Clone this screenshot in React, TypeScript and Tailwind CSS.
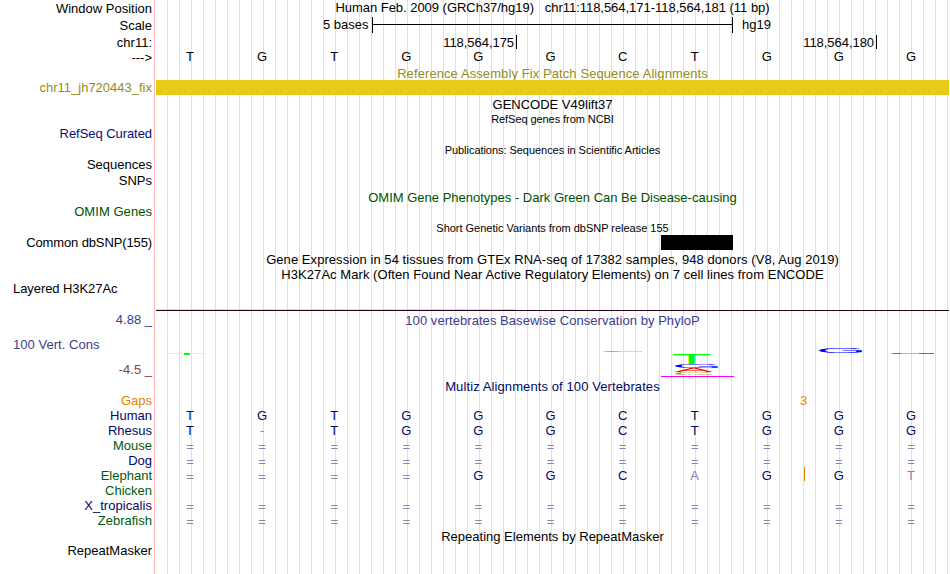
import React from "react";

interface Label {
  text: string;
  className: string;
}

interface Species {
  name: string;
  bases: string;
}

const labels: Label[] = [
  { text: "Window Position", className: "mt-px" },
  { text: "Scale", className: "mt-0.5" },
  { text: "chr11:", className: "mt-0.5" },
  { text: "--->", className: "" },
  { text: "chr11_jh720443_fix", className: "mt-[15px] text-[#968c19]" },
  { text: "RefSeq Curated", className: "mt-[31px] text-[#0c0c78] tracking-[-0.06px]" },
  { text: "Sequences", className: "mt-4" },
  { text: "SNPs", className: "mt-px" },
  { text: "OMIM Genes", className: "mt-4 text-[#005000] tracking-[0.05px]" },
  { text: "Common dbSNP(155)", className: "mt-4 tracking-[-0.12px]" },
  { text: "Layered H3K27Ac", className: "mt-[31px] self-start tracking-[-0.07px]" },
  { text: "4.88 _", className: "mt-4 text-[#3c3c8c]" },
  { text: "100 Vert. Cons", className: "mt-2.5 self-start text-[#3c3c8c] tracking-[0.04px]" },
  { text: "-4.5 _", className: "mt-2.5 text-[#8c3c3c]" },
  { text: "Gaps", className: "mt-4 text-[#e68200]" },
  { text: "Human", className: "text-[#000a64]" },
  { text: "Rhesus", className: "text-[#000a64]" },
  { text: "Mouse", className: "text-[#005a0a]" },
  { text: "Dog", className: "text-[#000a64]" },
  { text: "Elephant", className: "text-[#005a0a]" },
  { text: "Chicken", className: "text-[#005a0a]" },
  { text: "X_tropicalis", className: "text-[#000a64] tracking-[0.05px]" },
  { text: "Zebrafish", className: "text-[#005a0a]" },
  { text: "RepeatMasker", className: "mt-[15px]" },
];

const reference = "TGTGGGCTGGG";

const alignments: Species[] = [
  { name: "Human", bases: "TGTGGGCTGGG" },
  { name: "Rhesus", bases: "T-TGGGCTGGG" },
  { name: "Mouse", bases: "===========" },
  { name: "Dog", bases: "===========" },
  { name: "Elephant", bases: "====GGCAGGT" },
  { name: "Chicken", bases: "           " },
  { name: "X_tropicalis", bases: "===========" },
  { name: "Zebrafish", bases: "===========" },
];

function BaseRow({ bases, match }: { bases: string; match?: boolean }) {
  return (
    <div className="-ml-0.5 grid h-[15px] w-[793px] grid-cols-11 text-center">
      {bases.split("").map((base, i) => (
        <span
          key={i}
          className={
            !match
              ? "text-black"
              : base === reference[i]
                ? "text-[#000a64]"
                : base === "="
                  ? "pt-px text-[#8286b4]"
                  : "text-[#8286b4]"
          }
        >
          {base}
        </span>
      ))}
    </div>
  );
}

function Title({
  children,
  className,
}: {
  children: React.ReactNode;
  className: string;
}) {
  return (
    <div className={`h-[15px] text-center whitespace-pre ${className}`}>
      {children}
    </div>
  );
}

// One stacked logo letter, stretched to the given scale
function LogoLetter(props: {
  letter: string;
  x: number;
  y: number;
  sx: number;
  sy: number;
  color: string;
}) {
  return (
    <text
      transform={`translate(${props.x} ${props.y}) scale(${props.sx} ${props.sy})`}
      fontSize="100"
      fill={props.color}
    >
      {props.letter}
    </text>
  );
}

function ConservationLogo() {
  return (
    <svg width="793" height="51" viewBox="156 328 793 51" className="block">
      <rect x="168" y="353" width="37" height="1" fill="#d2fad2" />
      <rect x="184" y="353" width="6" height="2" fill="#00ff00" />
      <rect x="603" y="351" width="39" height="1" fill="#d8d8a8" />
      <rect x="606" y="351" width="12" height="1" fill="#b4b464" />
      <LogoLetter letter="T" x={671.6} y={364} sx={0.66} sy={0.155} color="#00ff00" />
      <LogoLetter letter="G" x={671.8} y={368} sx={0.655} sy={0.056} color="#0000ff" />
      <LogoLetter letter="A" x={674} y={372} sx={0.59} sy={0.06} color="#ff0000" />
      <LogoLetter letter="C" x={672} y={375} sx={0.6} sy={0.04} color="#a0a000" />
      <rect x="661" y="376" width="73" height="1" fill="#ff00ff" />
      <LogoLetter letter="G" x={815.8} y={353} sx={0.655} sy={0.068} color="#0000ff" />
      <rect x="891" y="353" width="43" height="1" fill="#b4b4f0" />
      <rect x="893" y="353" width="8" height="1" fill="#6464d8" />
      <rect x="919" y="353" width="15" height="1" fill="#6464d8" />
    </svg>
  );
}

export default function App() {
  return (
    <div className="flex h-[574px] w-[950px] overflow-hidden bg-white font-['Liberation_Sans',Arial,sans-serif] text-[13px] leading-[15px] text-black">
      <div className="flex w-[154px] shrink-0 flex-col items-end pr-0.5 pl-[13px] whitespace-pre">
        {labels.map((label) => (
          <div key={label.text} className={`h-[15px] shrink-0 ${label.className}`}>
            {label.text}
          </div>
        ))}
      </div>

      <div className="mr-px w-px shrink-0 bg-[#ffb4b4]" />

      <div className="flex w-[793px] shrink-0 flex-col bg-[repeating-linear-gradient(to_right,transparent_0px,transparent_11px,#dcdcff_11px,#dcdcff_12px)]">
        <Title className="tracking-[-0.03px]">
          {"Human Feb. 2009 (GRCh37/hg19)   chr11:118,564,171-118,564,181 (11 bp)"}
        </Title>

        <div className="mt-0.5 flex h-4 pl-[167px]">
          <span className="w-[49px]">5 bases</span>
          <div className="w-[361px] border-x border-black pt-[7px]">
            <div className="h-px w-full bg-black" />
          </div>
          <span className="ml-[9px]">hg19</span>
        </div>

        <div className="mt-px flex h-[15px]">
          <div className="flex w-[361px] justify-end">
            <span className="pt-px pr-0.5 tracking-[-0.05px]">118,564,175</span>
            <div className="mt-px h-3.5 w-px bg-black" />
          </div>
          <div className="flex w-[360px] justify-end">
            <span className="pt-px pr-0.5 tracking-[-0.05px]">118,564,180</span>
            <div className="mt-px h-3.5 w-px bg-black" />
          </div>
        </div>

        <BaseRow bases={reference} />

        <Title className="mt-0.5 -mb-px tracking-[0.09px] text-[#968c19]">
          Reference Assembly Fix Patch Sequence Alignments
        </Title>
        <div className="h-[15px] bg-[#e8cb16]" />

        <Title className="mt-0.5">GENCODE V49lift37</Title>
        <Title className="text-[11px] tracking-[-0.07px]">RefSeq genes from NCBI</Title>
        <Title className="mt-4 text-[11px] tracking-[-0.045px]">
          Publications: Sequences in Scientific Articles
        </Title>
        <Title className="mt-[32px] text-[#005000]">
          OMIM Gene Phenotypes - Dark Green Can Be Disease-causing
        </Title>
        <Title className="mt-4 -mb-px text-[11px] tracking-[-0.02px]">
          Short Genetic Variants from dbSNP release 155
        </Title>
        <div className="ml-[505px] h-[15px] w-[72px] bg-black" />
        <Title className="mt-0.5 tracking-[0.06px]">
          Gene Expression in 54 tissues from GTEx RNA-seq of 17382 samples, 948
          donors (V8, Aug 2019)
        </Title>
        <Title className="tracking-[0.055px]">
          H3K27Ac Mark (Often Found Near Active Regulatory Elements) on 7 cell
          lines from ENCODE
        </Title>

        <div className="mt-[27px] h-px w-[360px] bg-[#ffd2a0]" />
        <div className="h-px bg-[#28001e]" />
        <Title className="mt-0.5 tracking-[0.05px] text-[#3c3c8c]">
          100 vertebrates Basewise Conservation by PhyloP
        </Title>
        <ConservationLogo />
        <Title className="tracking-[0.1px] text-[#000a64]">
          Multiz Alignments of 100 Vertebrates
        </Title>

        <div className="-mt-px h-[15px] pl-[644px] text-[#e68200]">3</div>
        {alignments.map((species) => (
          <div key={species.name} className="relative">
            <BaseRow bases={species.bases} match />
            {species.name === "Elephant" && (
              <div className="absolute -top-px left-[648px] h-3.5 w-px bg-[#e68200]" />
            )}
          </div>
        ))}
        <Title className="mt-px">Repeating Elements by RepeatMasker</Title>
      </div>
    </div>
  );
}
